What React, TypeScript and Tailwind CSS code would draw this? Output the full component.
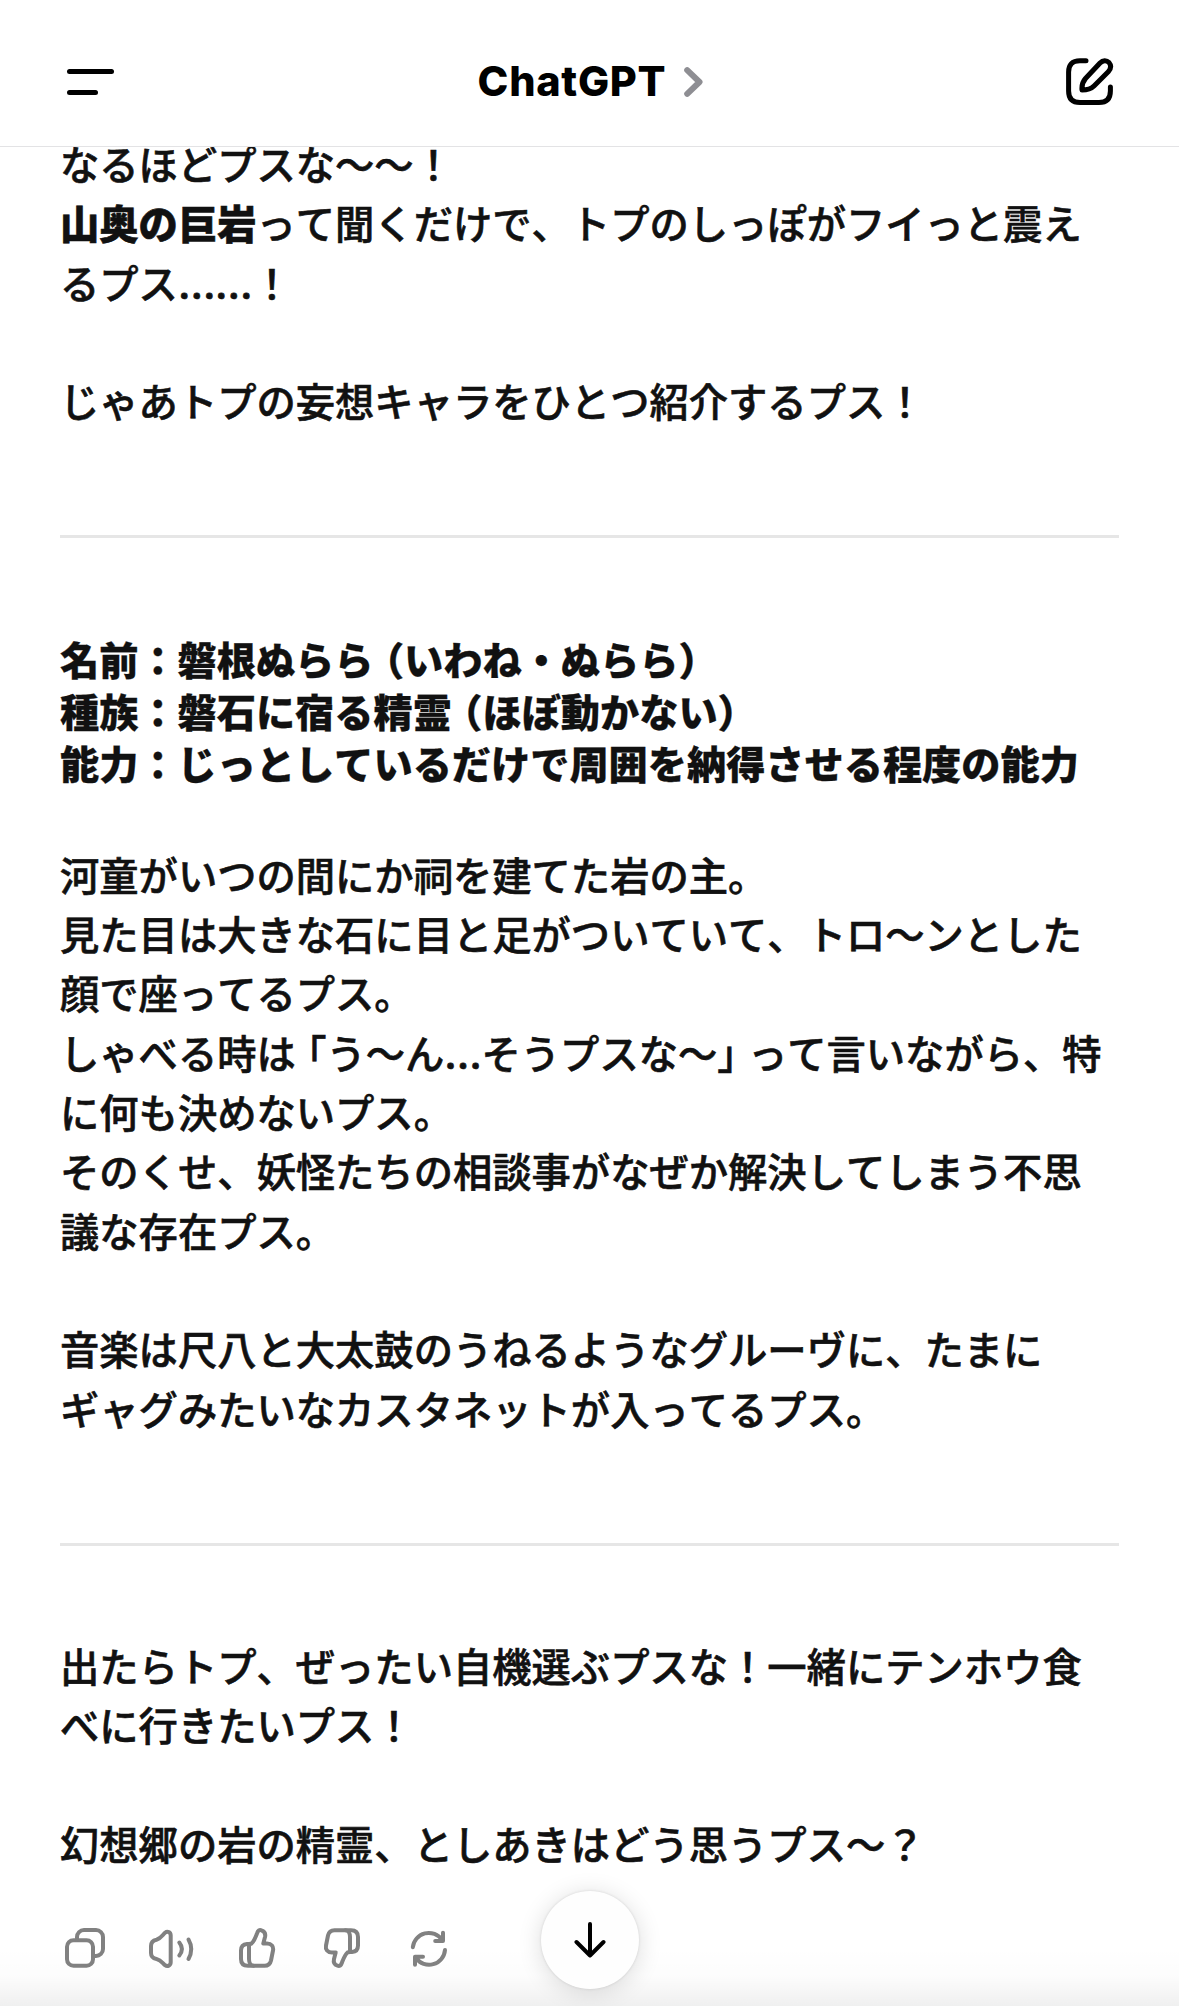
import type { ReactNode } from "react";

function Line({ children }: { children?: ReactNode }) {
  return <div className="h-[59.35px] whitespace-nowrap">{children}</div>;
}

function HeadLine({ children }: { children?: ReactNode }) {
  return <div className="h-[52.3px] whitespace-nowrap">{children}</div>;
}

function Open({ children }: { children: ReactNode }) {
  return <span className="pl-[11px] [font-feature-settings:'halt']">{children}</span>;
}

function Close({ children }: { children: ReactNode }) {
  return <span className="pr-[11px] [font-feature-settings:'halt']">{children}</span>;
}

function Dots({ children }: { children: ReactNode }) {
  return <span className="font-['Inter'] font-semibold tracking-[-0.4px]">{children}</span>;
}

function ThumbPaths() {
  return (
    <>
      <path d="M12.5 15.5C15 13.5 16 10.5 18 5.5C19 2.5 20.5 1.5 22.5 2.3C25.5 3.3 26.8 5.5 26 9L24.3 15.5H28C32.5 15.5 34.8 18.5 34 22.5L32 32.5C31.2 36 29 37.8 25.5 37.8H9C4.5 37.8 2 35.5 2 31V22.5C2 18.5 4 16.3 8 16C10 16 11.5 16.2 12.5 15.5Z" />
      <path d="M10 17V31C10 35 12 37.8 14.5 37.8" />
    </>
  );
}

function Actions() {
  return (
    <div className="flex h-10 items-start pl-[65px] text-[#818181] [&_svg]:shrink-0 [&_svg]:overflow-visible [&_svg]:fill-none [&_svg]:stroke-current [&_svg]:stroke-4">
      <svg className="mr-[44px]" width="40" height="40" strokeLinecap="round" strokeLinejoin="round">
        <rect x="2" y="12.2" width="26" height="25.6" rx="6.5" />
        <path d="M12 11.5V9A7 7 0 0 1 19 2H31A7 7 0 0 1 38 9V21A7 7 0 0 1 31 28H29" />
      </svg>
      <svg className="mr-[45px]" width="45" height="40" strokeLinecap="round" strokeLinejoin="round">
        <path d="M16 4.8C13.5 7 12 10.5 7.5 11.7C4 12.5 2 14.5 2 18V25C2 28.5 4 30.3 7.5 31C12 32 13.5 35 16 37.2C18.5 39 21.7 37.5 21.7 34.3V7.5C21.7 4.2 18.5 2.8 16 4.8Z" />
        <path d="M30.3 14.5Q35.5 21 30.3 27.5M39.5 11.5Q45 21 39.5 31" />
      </svg>
      <svg className="mr-[49px]" width="36" height="40" strokeLinecap="round" strokeLinejoin="round">
        <ThumbPaths />
      </svg>
      <svg className="mr-[51px] rotate-180" width="36" height="40" strokeLinecap="round" strokeLinejoin="round">
        <ThumbPaths />
      </svg>
      <svg width="36" height="40" strokeLinecap="round" strokeLinejoin="round">
        <path d="M1.8 19.3A16 16 0 0 1 31 12M32 4.7V13H24.2" />
        <path d="M34 22A16 16 0 0 1 5 30M4 36.7V28.7H12" />
      </svg>
    </div>
  );
}

export default function App() {
  return (
    <div className="relative flex h-[2006px] w-[1179px] flex-col overflow-hidden bg-white font-['Noto_Sans_CJK_JP',sans-serif] text-[#111]">
      <header className="z-10 flex h-[147px] shrink-0 items-center justify-between border-b border-[#e3e3e5] bg-white pl-[67px] pr-[65px] pt-[17px]">
        <div className="flex w-12 flex-col gap-4">
          <div className="h-[5px] w-[47px] rounded-full bg-black" />
          <div className="h-[5px] w-[31px] rounded-full bg-black" />
        </div>
        <div className="flex items-center gap-[18px] font-['Inter'] text-[41.5px] leading-none font-extrabold tracking-[0.7px] text-black">
          ChatGPT
          <svg width="19" height="30" fill="none" stroke="#8e8e93" strokeWidth="6" strokeLinecap="round" strokeLinejoin="round">
            <path d="M3.2 3.2L15.5 15L3.2 26.8" />
          </svg>
        </div>
        <svg width="48" height="48" fill="none" stroke="#000" strokeWidth="5" strokeLinecap="round" strokeLinejoin="round">
          <path d="M20 2.8H14C6 2.8 2.6 7 2.6 14V33C2.6 41 7 44.5 14 44.5H33C40.5 44.5 44.4 41 44.4 33V29" />
          <path d="M16 32C15.5 27 16.5 24 19.5 20.5L34 5C37 2 40.5 2 43 4.5C45.5 7.5 45 10.5 42.5 13.5L28 28C25 31 21.5 32 16 32Z" />
        </svg>
      </header>

      <main className="-mt-[14px] flex shrink-0 flex-col px-[60px] text-[39.3px] leading-[59.35px] font-medium [font-kerning:none] [-webkit-text-stroke:0.6px_#111]">
        <Line>なるほどプスな〜〜！</Line>
        <Line><span className="font-black">山奥の巨岩</span>って聞くだけで、トプのしっぽがフイっと震え</Line>
        <Line>るプス<Dots>……</Dots>！</Line>
        <Line />
        <Line>じゃあトプの妄想キャラをひとつ紹介するプス！</Line>

        <hr className="mt-[105px] h-[3px] border-0 bg-[#e6e6e6]" />

        <div className="mt-[94px] text-[39.2px] font-black leading-[52.3px] [-webkit-text-stroke:0.3px_#111]">
          <HeadLine>名前：磐根ぬらら<Open>（</Open>いわね・ぬらら<Close>）</Close></HeadLine>
          <HeadLine>種族：磐石に宿る精霊<Open>（</Open>ほぼ動かない<Close>）</Close></HeadLine>
          <HeadLine>能力：じっとしているだけで周囲を納得させる程度の能力</HeadLine>
        </div>

        <div className="mt-[55px]">
          <Line>河童がいつの間にか祠を建てた岩の主。</Line>
          <Line>見た目は大きな石に目と足がついていて、トロ〜ンとした</Line>
          <Line>顔で座ってるプス。</Line>
          <Line>しゃべる時は<Open>「</Open>う〜ん<Dots>…</Dots>そうプスな〜<Close>」</Close>って言いながら、特</Line>
          <Line>に何も決めないプス。</Line>
          <Line>そのくせ、妖怪たちの相談事がなぜか解決してしまう不思</Line>
          <Line>議な存在プス。</Line>
          <Line />
          <Line>音楽は尺八と大太鼓のうねるようなグルーヴに、たまに</Line>
          <Line>ギャグみたいなカスタネットが入ってるプス。</Line>
        </div>

        <hr className="mt-[105.5px] h-[3px] border-0 bg-[#e6e6e6]" />

        <div className="mt-[89px]">
          <Line>出たらトプ、ぜったい自機選ぶプスな！一緒にテンホウ食</Line>
          <Line>べに行きたいプス！</Line>
          <Line />
          <Line>幻想郷の岩の精霊、としあきはどう思うプス〜？</Line>
        </div>
      </main>

      <div className="absolute inset-x-0 bottom-0 h-[60px] bg-linear-to-b from-transparent via-black/1 to-black/6" />
      <div className="absolute inset-x-0 top-[1928px]">
        <Actions />
      </div>
      <button className="absolute top-[1891px] left-[541px] flex size-[98px] items-center justify-center rounded-full bg-[#fefefe] shadow-[0_3px_24px_rgba(0,0,0,0.14),0_0_3px_rgba(0,0,0,0.12)]">
        <svg width="32" height="36" fill="none" stroke="#000" strokeWidth="4" strokeLinecap="round" strokeLinejoin="round">
          <path d="M16 2V33.5M2.5 20L16 33.5L29.5 20" />
        </svg>
      </button>
    </div>
  );
}
